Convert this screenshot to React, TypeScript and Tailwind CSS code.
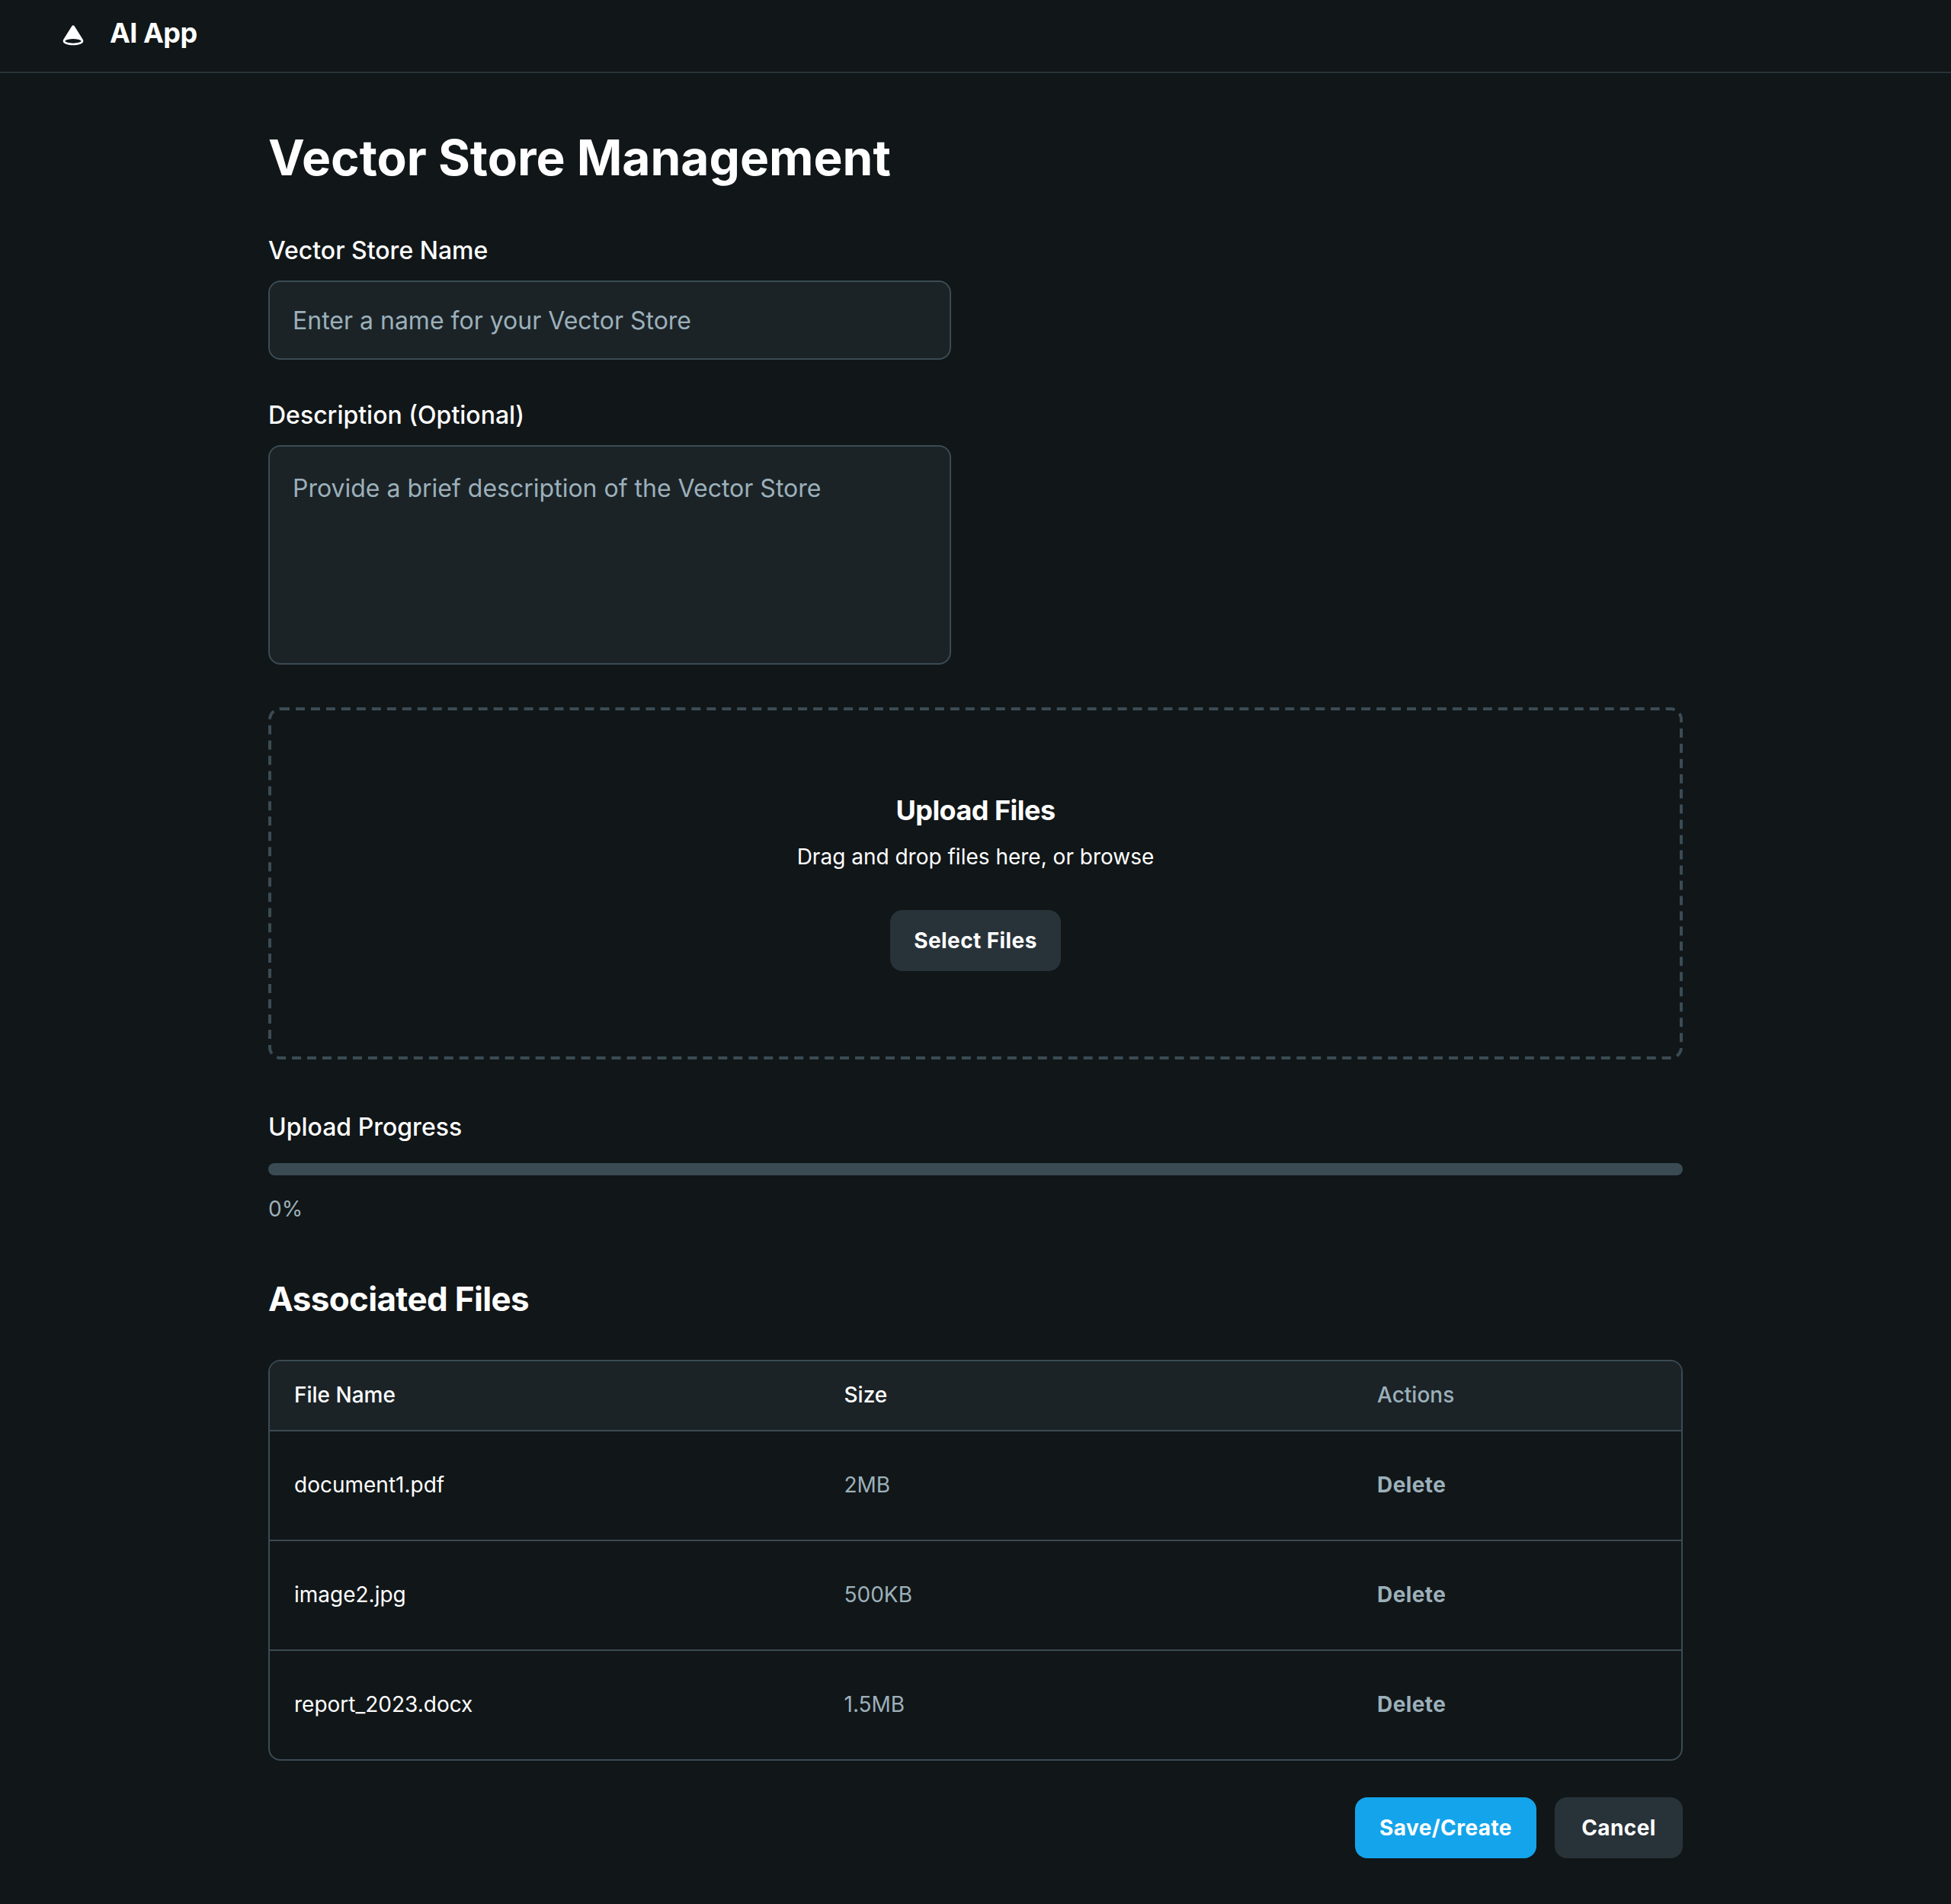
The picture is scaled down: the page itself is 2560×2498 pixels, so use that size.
import React from "react";

const files = [
  { name: "document1.pdf", size: "2MB" },
  { name: "image2.jpg", size: "500KB" },
  { name: "report_2023.docx", size: "1.5MB" },
];

function Logo() {
  return (
    <svg viewBox="0 0 48 48" fill="none" className="mb-0.5 size-8">
      <path
        d="M13.8261 30.5736C16.7203 29.8826 20.2244 29.4783 24 29.4783C27.7756 29.4783 31.2797 29.8826 34.1739 30.5736C36.9144 31.2278 39.9967 32.7669 41.3563 33.8352L24.8486 7.36089C24.4571 6.73303 23.5429 6.73303 23.1514 7.36089L6.64374 33.8352C8.00331 32.7669 11.0856 31.2278 13.8261 30.5736Z"
        fill="currentColor"
      />
      <path
        fillRule="evenodd"
        clipRule="evenodd"
        d="M39.998 35.764C39.9944 35.7463 39.9875 35.7155 39.9748 35.6706C39.9436 35.5601 39.8949 35.4259 39.8346 35.2825C39.8168 35.2403 39.7989 35.1993 39.7813 35.1602C38.5103 34.2887 35.9788 33.0607 33.7095 32.5189C30.9875 31.8691 27.6413 31.4783 24 31.4783C20.3587 31.4783 17.0125 31.8691 14.2905 32.5189C12.0012 33.0654 9.44505 34.3104 8.18538 35.1832C8.17384 35.2075 8.16216 35.233 8.15052 35.2592C8.09919 35.3751 8.05721 35.4886 8.02977 35.589C8.00356 35.6848 8.00039 35.7333 8.00004 35.7388C8.00004 35.7641 8.0104 36.0767 8.68485 36.6314C9.34546 37.1746 10.4222 37.7531 11.9291 38.2772C14.9242 39.319 19.1919 40 24 40C28.8081 40 33.0758 39.319 36.0709 38.2772C37.5778 37.7531 38.6545 37.1746 39.3151 36.6314C39.9006 36.1499 39.9857 35.8511 39.998 35.764ZM4.95178 32.7688L21.4543 6.30267C22.6288 4.4191 25.3712 4.41909 26.5457 6.30267L43.0534 32.777C43.0709 32.8052 43.0878 32.8338 43.104 32.8629L43.1199 32.8918C43.1738 32.9925 43.2062 33.0545 43.244 33.1299C43.319 33.2792 43.4196 33.489 43.5217 33.7317C43.6901 34.1321 44 34.9311 44 35.7391C44 37.4427 43.003 38.7775 41.8558 39.7209C40.6947 40.6757 39.1354 41.4464 37.385 42.0552C33.8654 43.2794 29.133 44 24 44C18.867 44 14.1346 43.2794 10.615 42.0552C8.86463 41.4464 7.30529 40.6757 6.14419 39.7209C4.99695 38.7775 3.99999 37.4427 3.99999 35.7391C3.99999 34.8725 4.29264 34.0922 4.49321 33.6393C4.60375 33.3898 4.71348 33.1804 4.79687 33.0311C4.83898 32.9556 4.87547 32.8935 4.9035 32.8471L4.95178 32.7688ZM35.9868 29.004L24 9.77997L12.0131 29.004C12.4661 28.8609 12.9179 28.7342 13.3617 28.6282C16.4281 27.8961 20.0901 27.4783 24 27.4783C27.9099 27.4783 31.5719 27.8961 34.6383 28.6282C35.082 28.7342 35.5339 28.8609 35.9868 29.004Z"
        fill="currentColor"
      />
    </svg>
  );
}

export default function App() {
  return (
    <div className="flex min-h-[2498px] w-full flex-col bg-[#111618] font-['Inter',sans-serif] text-white">
      <header className="flex h-24 items-center gap-8 border-b-2 border-[#283339] px-20">
        <Logo />
        <h2 className="pb-2 text-[36px] leading-[44px] font-bold tracking-[-0.015em]">AI App</h2>
      </header>

      <main className="mx-auto flex w-[1856px] flex-col pt-10">
        <h1 className="pt-[30px] pb-[33px] text-[64px] leading-[81px] font-bold">Vector Store Management</h1>

        <label className="flex w-[896px] flex-col pt-[25px] pb-6">
          <span className="pb-4 text-[32px] leading-[47px] font-medium">Vector Store Name</span>
          <input
            placeholder="Enter a name for your Vector Store"
            className="h-[104px] rounded-2xl border-2 border-[#3b4b54] bg-[#1b2327] px-[30px] pt-px text-[32px] leading-[47px] placeholder:text-[#9cb0ba]"
          />
        </label>

        <label className="flex w-[896px] flex-col pt-[25px] pb-6">
          <span className="pb-4 text-[32px] leading-[47px] font-medium">Description (Optional)</span>
          <textarea
            placeholder="Provide a brief description of the Vector Store"
            className="h-72 resize-none rounded-2xl border-2 border-[#3b4b54] bg-[#1b2327] px-[30px] pt-[31px] pb-[30px] text-[32px] leading-[47px] placeholder:text-[#9cb0ba]"
          />
        </label>

        <section className="relative my-8 flex h-[462px] flex-col items-center pt-[113px]">
          {/* Dashed outline, drawn at half size and scaled up for long dashes */}
          <div className="pointer-events-none absolute top-0 left-0 h-1/2 w-1/2 origin-top-left scale-200 rounded-lg border-2 border-dashed border-[#3b4b54]" />
          <p className="text-[36px] leading-[44px] font-bold tracking-[-0.015em]">Upload Files</p>
          <p className="mt-[18px] text-[28px] leading-[42px]">Drag and drop files here, or browse</p>
          <button className="mt-[49px] h-20 w-56 rounded-2xl bg-[#283339] text-[28px] font-bold tracking-[0.015em]">
            Select Files
          </button>
        </section>

        <section className="flex flex-col pt-[33px] pb-8">
          <p className="text-[32px] leading-[47px] font-medium">Upload Progress</p>
          <div className="mt-6 h-4 rounded-full bg-[#3b4b54]" />
          <p className="mt-[23px] pb-px text-[28px] leading-[42px] text-[#9cb0ba]">0%</p>
        </section>

        <h2 className="pt-9 pb-7 text-[44px] leading-[56px] font-bold tracking-[-0.015em]">Associated Files</h2>

        <div className="my-6 overflow-hidden rounded-2xl border-2 border-[#3b4b54] text-[28px] leading-[42px]">
          <div className="grid h-[90px] grid-cols-[721.5px_699.5px_1fr] items-center bg-[#1b2327] pb-0.5 font-medium">
            <span className="px-8">File Name</span>
            <span className="px-8">Size</span>
            <span className="px-8 text-[#9cb0ba]">Actions</span>
          </div>
          {files.map((file) => (
            <div
              key={file.name}
              className="grid h-36 grid-cols-[721.5px_699.5px_1fr] items-center border-t-2 border-[#3b4b54] pb-0.5 text-[#9cb0ba]"
            >
              <span className="px-8 text-white">{file.name}</span>
              <span className="px-8">{file.size}</span>
              <span className="px-8 font-bold tracking-[0.015em]">Delete</span>
            </div>
          ))}
        </div>

        <div className="flex justify-end gap-6 py-6 text-[28px] font-bold tracking-[0.015em]">
          <button className="h-20 w-[238px] rounded-2xl bg-[#14a4eb]">Save/Create</button>
          <button className="h-20 w-[168px] rounded-2xl bg-[#283339]">Cancel</button>
        </div>
      </main>
    </div>
  );
}
